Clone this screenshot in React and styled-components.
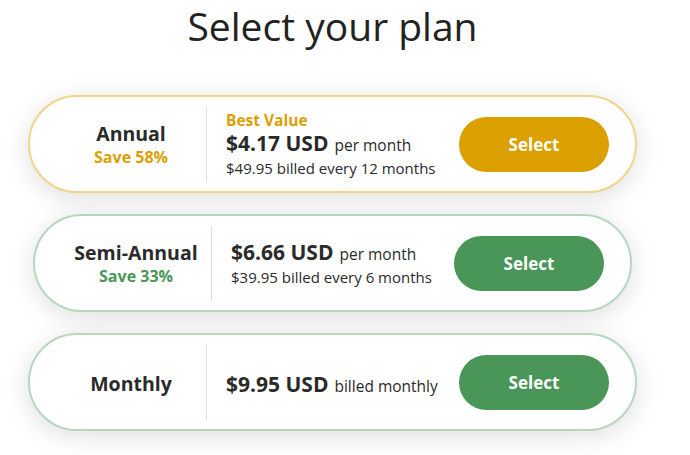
import React from "react";
import styled, { createGlobalStyle } from "styled-components";

const GlobalStyle = createGlobalStyle`
  body {
    margin: 0;
    background: #fff;
    font-family: "Open Sans", "Noto Sans", sans-serif;
    color: #2a2a2a;
  }
`;

const colors = {
  gold: { main: "#dc9f00", border: "#f1d38b" },
  green: { main: "#4a9558", border: "#b6d7bd" },
};

const Page = styled.div`
  width: 609px;
  margin-left: 28px;
  padding-bottom: 30px;
`;

const Title = styled.h1`
  margin: 0 0 43px;
  font-size: 39px;
  line-height: 52px;
  font-weight: 500;
  text-align: center;
  color: #222;
`;

const PlanList = styled.div`
  display: flex;
  flex-direction: column;
  gap: 21px;
`;

const Card = styled.div`
  box-sizing: border-box;
  height: 98px;
  margin: 0 ${(p) => p.$inset}px;
  padding: 0 26px 0 26px;
  display: flex;
  align-items: center;
  background: #fff;
  border: 2px solid ${(p) => colors[p.$tone].border};
  border-radius: 49px;
  box-shadow: 0 5px 26px rgba(0, 0, 0, 0.13);
`;

const NameCol = styled.div`
  width: 150px;
  display: flex;
  flex-direction: column;
  align-items: center;
  padding-top: 2px;
`;

const Name = styled.div`
  font-size: 19.5px;
  line-height: 25px;
  font-weight: 700;
  color: #2a2a2a;
`;

const Save = styled.div`
  font-size: 16px;
  line-height: 23px;
  font-weight: 700;
  color: ${(p) => colors[p.$tone].main};
`;

const Divider = styled.div`
  width: 1px;
  height: 75px;
  background: #dedede;
`;

const PriceCol = styled.div`
  flex: 1;
  padding-left: 19px;
  display: flex;
  flex-direction: column;
  padding-top: ${(p) => (p.$single ? 6 : 1)}px;
`;

const Badge = styled.div`
  font-size: 15.5px;
  line-height: 21px;
  font-weight: 700;
  color: ${colors.gold.main};
`;

const PriceLine = styled.div`
  line-height: 24px;
  white-space: nowrap;
`;

const Amount = styled.span`
  font-size: 21px;
  font-weight: 700;
  color: #2a2a2a;
`;

const Per = styled.span`
  font-size: 15.5px;
  font-weight: 400;
  margin-left: 6px;
  color: #2a2a2a;
`;

const Billed = styled.div`
  font-size: 15px;
  line-height: 22px;
  color: #2a2a2a;
  white-space: nowrap;
`;

const SelectButton = styled.button`
  width: 150px;
  height: 55px;
  border: none;
  border-radius: 28px;
  background: ${(p) => colors[p.$tone].main};
  color: #fff;
  font-family: "Open Sans", sans-serif;
  font-size: 17px;
  font-weight: 700;
  cursor: pointer;
`;

const plans = [
  {
    name: "Annual",
    save: "Save 58%",
    badge: "Best Value",
    price: "$4.17 USD",
    per: "per month",
    billed: "$49.95 billed every 12 months",
    tone: "gold",
    inset: 0,
  },
  {
    name: "Semi-Annual",
    save: "Save 33%",
    price: "$6.66 USD",
    per: "per month",
    billed: "$39.95 billed every 6 months",
    tone: "green",
    inset: 5,
  },
  {
    name: "Monthly",
    price: "$9.95 USD",
    per: "billed monthly",
    tone: "green",
    inset: 0,
  },
];

const App = () => {
  return (
    <Page>
      <GlobalStyle />
      <Title>Select your plan</Title>
      <PlanList>
        {plans.map((plan) => (
          <Card key={plan.name} $tone={plan.tone} $inset={plan.inset}>
            <NameCol>
              <Name>{plan.name}</Name>
              {plan.save && <Save $tone={plan.tone}>{plan.save}</Save>}
            </NameCol>
            <Divider />
            <PriceCol $single={!plan.billed}>
              {plan.badge && <Badge>{plan.badge}</Badge>}
              <PriceLine>
                <Amount>{plan.price}</Amount>
                <Per>{plan.per}</Per>
              </PriceLine>
              {plan.billed && <Billed>{plan.billed}</Billed>}
            </PriceCol>
            <SelectButton $tone={plan.tone}>Select</SelectButton>
          </Card>
        ))}
      </PlanList>
    </Page>
  );
};

export default App;
